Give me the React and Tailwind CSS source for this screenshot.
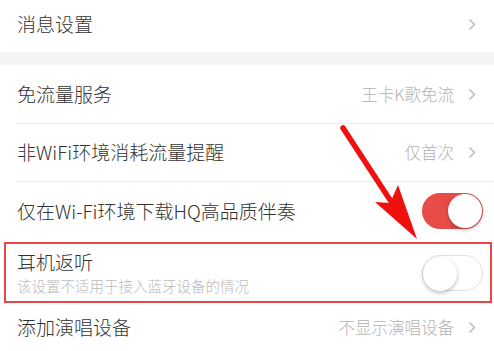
import React, { useState } from "react";

const font = {
  fontFamily: '"Noto Sans CJK SC", "Noto Sans", sans-serif',
};

const Chevron = () => (
  <svg width="8" height="13" viewBox="0 0 8 13" className="ml-[14px] shrink-0">
    <path d="M1.5 1.5 L6.5 6.5 L1.5 11.5" fill="none" stroke="#b5b5b5" strokeWidth="1.4" />
  </svg>
);

const Toggle = ({ on, onClick }) => (
  <button
    onClick={onClick}
    className={
      "relative w-[61px] h-[36px] rounded-full shrink-0 " +
      (on
        ? "bg-[#e84c47]"
        : "bg-white border border-[#e2e2e2]")
    }
  >
    <span
      className={
        "absolute top-[1px] w-[34px] h-[34px] rounded-full bg-white shadow-[0_2px_4px_rgba(0,0,0,0.25)] " +
        (on ? "right-[1px]" : "left-0 top-0")
      }
    />
  </button>
);

const LinkRow = ({ title, value, h = "h-[58px]" }) => (
  <div className={"flex items-center justify-between pl-[17px] pr-[18px] " + h}>
    <span className="text-[19px] text-[#333] font-light">{title}</span>
    <div className="flex items-center">
      {value && <span className="text-[16.5px] text-[#b3b3b3] font-light">{value}</span>}
      <Chevron />
    </div>
  </div>
);

const Divider = () => <div className="ml-[17px] h-px bg-[#ececec]" />;

const App = () => {
  const [hq, setHq] = useState(true);
  const [monitor, setMonitor] = useState(false);

  return (
    <div className="relative w-[494px] h-[351px] overflow-hidden bg-white" style={font}>
      <div className="flex items-center justify-between pl-[17px] pr-[18px] h-[52px] pb-1">
        <span className="text-[19px] text-[#333] font-light">消息设置</span>
        <Chevron />
      </div>
      <div className="h-[13px] bg-[#f4f4f4]" />
      <LinkRow title="免流量服务" value="王卡K歌免流" />
      <Divider />
      <LinkRow title="非WiFi环境消耗流量提醒" value="仅首次" h="h-[57px]" />
      <Divider />
      <div className="flex items-center justify-between pl-[17px] pr-[11px] h-[58px]">
        <span className="text-[19px] text-[#333] font-light">仅在Wi-Fi环境下载HQ高品质伴奏</span>
        <Toggle on={hq} onClick={() => setHq(!hq)} />
      </div>
      <div className="ml-[4px] mr-[2px] mt-[2px] h-[61px] border-2 border-[#e8474a] flex items-center justify-between pl-[11px] pr-[7px]">
        <div className="flex flex-col leading-none">
          <span className="text-[19px] text-[#333] font-light leading-[24px]">耳机返听</span>
          <span className="text-[14.5px] text-[#bbb] font-light leading-[20px] mt-[2px]">该设置不适用于接入蓝牙设备的情况</span>
        </div>
        <Toggle on={monitor} onClick={() => setMonitor(!monitor)} />
      </div>
      <LinkRow title="添加演唱设备" value="不显示演唱设备" h="h-[48px]" />

      <svg className="absolute left-0 top-0 pointer-events-none" width="494" height="351">
        <line x1="343" y1="128" x2="394" y2="206" stroke="#f01010" strokeWidth="5.5" strokeLinecap="round" />
        <path d="M417 239 L375 202 L390 203 L398 185 Z" fill="#f01010" />
      </svg>
    </div>
  );
};

export default App;
